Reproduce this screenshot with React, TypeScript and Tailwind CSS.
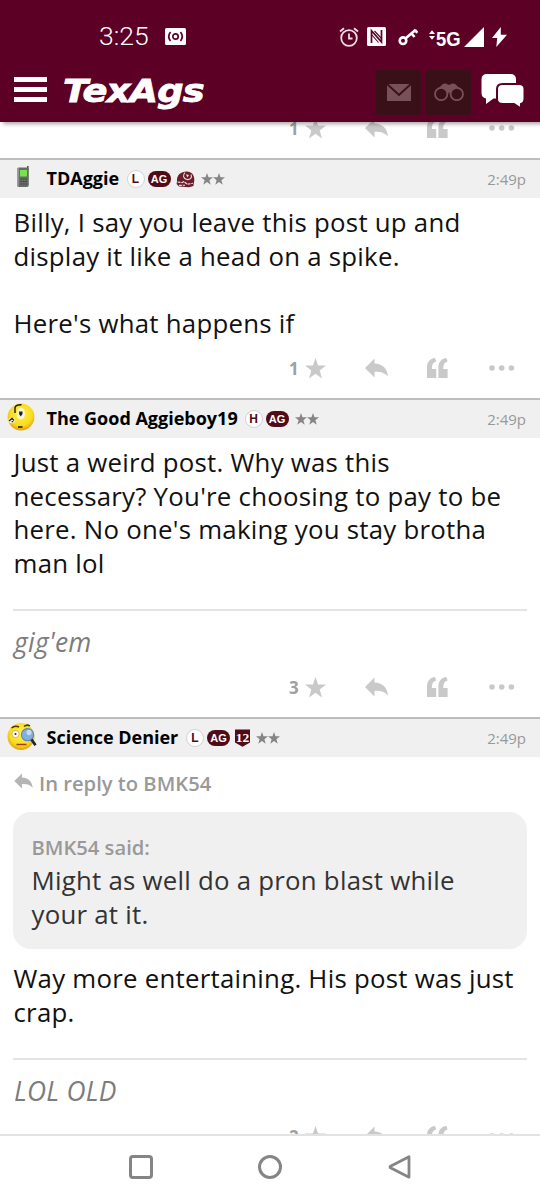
import type { ReactNode } from 'react';

const STAR = 'M10.5 0l2.6 7.6h7.9l-6.3 4.9 2.3 8-6.5-4.8-6.5 4.8 2.3-8L0 7.6h7.9z';

function ReplyIcon({ className }: { className: string }) {
  return (
    <svg viewBox="0 0 23 20" className={className} fill="currentColor">
      <path d="M0 10L9.5 0.5V5.6C17 5.8 22 10 23 18.3C19 14.3 15 13.4 9.5 13.9V19.5Z" />
    </svg>
  );
}

function Actions({ count }: { count: number }) {
  return (
    <div className="flex h-[57px] items-center justify-end pr-[25px] pb-[3px] text-[#c9c9c9]">
      <span className="w-[16px] text-[17px] leading-none font-bold text-[#a0a0a0]">{count}</span>
      <svg viewBox="0 0 21 21" className="h-[21px] w-[21px]" fill="currentColor">
        <path d={STAR} />
      </svg>
      <ReplyIcon className="ml-[39px] h-[20px] w-[23px]" />
      <svg viewBox="0 0 21 20" className="mb-px ml-[39px] h-[20px] w-[21px]" fill="currentColor">
        <path d="M0 20V9.5C0 4 3 0.5 8 0L9.2 3.6C6.5 4.2 4.9 6.5 4.9 9.8V11H9.2V20Z" />
        <path d="M11.4 20V9.5C11.4 4 14.4 0.5 19.4 0L20.6 3.6C17.9 4.2 16.3 6.5 16.3 9.8V11H20.6V20Z" />
      </svg>
      <svg viewBox="0 0 26 6" className="ml-[41px] h-[6px] w-[26px]" fill="currentColor">
        <circle cx="3" cy="3" r="2.8" />
        <circle cx="12.7" cy="3" r="2.8" />
        <circle cx="22.4" cy="3" r="2.8" />
      </svg>
    </div>
  );
}

function LetterBadge({ letter }: { letter: string }) {
  return (
    <span className="flex h-[18px] w-[18px] items-center justify-center rounded-full border border-[#d2d2d2] bg-white font-['Liberation_Sans',sans-serif] text-[12px] leading-none font-bold text-[#500a18]">
      {letter}
    </span>
  );
}

function AgBadge() {
  return (
    <span className="ml-[3px] flex h-[16px] w-[23px] items-center justify-center rounded-full bg-[#500a18] font-['Liberation_Sans',sans-serif] text-[11px] leading-none font-bold text-white">
      AG
    </span>
  );
}

function HelmetBadge() {
  return (
    <svg viewBox="0 0 19 17" className="ml-[5px] h-[17px] w-[19px]">
      <path d="M1 10C0.6 4 5 0.6 10.5 0.6C16 0.6 18.6 4.6 18.3 9.5L17.4 15L13 16.3L3 15.6L0.6 13Z" fill="#6b1d2b" />
      <path d="M9 1.6C6.5 4 7 7.5 11 8.5C14 9 16.5 6.5 15 3.5" fill="none" stroke="#e9dadd" strokeWidth="1.1" />
      <path d="M1.5 11L6 11.6L8 10.5L11 13.2L17 12.3M3 14.4L9 14.2" fill="none" stroke="#efe4e6" strokeWidth="1.1" strokeDasharray="3 0.8" />
      <path d="M10 3.2L13 4L11.3 6.6Z" fill="#eee1e4" />
    </svg>
  );
}

function TwelfthManBadge() {
  return (
    <svg viewBox="0 0 15 18" className="ml-[5px] h-[18px] w-[15px]">
      <path d="M0 0.5H15V13.5L7.5 17.8L0 13.5Z" fill="#500a18" />
      <text x="7.5" y="12.6" textAnchor="middle" fill="#fff" fontSize="13.5" fontWeight="700" fontFamily="Liberation Serif, serif">
        12
      </text>
    </svg>
  );
}

function Stars() {
  return (
    <span className="ml-[6px] flex text-[#858585]">
      <svg viewBox="0 0 21 21" className="h-[12px] w-[12px]" fill="currentColor"><path d={STAR} /></svg>
      <svg viewBox="0 0 21 21" className="h-[12px] w-[12px]" fill="currentColor"><path d={STAR} /></svg>
    </span>
  );
}

function PhoneAvatar() {
  return (
    <svg viewBox="0 0 14 22" className="ml-[9px] h-[22px] w-[14px]">
      <path d="M11 0H12.6V4H11Z" fill="#555" />
      <rect x="1" y="1.5" width="11.8" height="19.5" rx="2" fill="#666b68" />
      <path d="M1 4C1 2.5 2 1.8 3 1.8L2.6 20.8C1.6 20.5 1 20 1 19Z" fill="#9a9d9b" />
      <rect x="4" y="4" width="7" height="6.5" fill="#79e34c" />
      <path d="M4.5 13H11M4.5 15.5H11M4.5 18H11" stroke="#444" strokeWidth="1.1" strokeDasharray="1.6 0.8" />
    </svg>
  );
}

function ConfusedAvatar() {
  return (
    <svg viewBox="0 0 28 28" className="h-[28px] w-[28px]">
      <defs>
        <radialGradient id="face" cx="0.5" cy="0.4" r="0.6">
          <stop offset="0" stopColor="#fff34a" />
          <stop offset="0.7" stopColor="#f9db20" />
          <stop offset="1" stopColor="#e2a10c" />
        </radialGradient>
      </defs>
      <circle cx="14" cy="14" r="13.4" fill="url(#face)" />
      <ellipse cx="13.8" cy="10.5" rx="4.2" ry="6" fill="#fff6d0" />
      <ellipse cx="4.6" cy="17.5" rx="3.4" ry="2.8" fill="#fff6d0" />
      <path d="M8 10V4.5Q9 1.6 14.5 1.8" fill="none" stroke="#1b1b10" strokeWidth="1.4" />
      <path d="M12 8.5H15.5V11L13.8 13.5L12.3 11.5Z" fill="#1e2030" />
      <path d="M2 18L5 15.5L7 17.5M4.6 18.7H6.2" fill="none" stroke="#1e2020" strokeWidth="1.3" />
      <path d="M11 24H15.5" stroke="#332d00" strokeWidth="1.7" />
    </svg>
  );
}

function DetectiveAvatar() {
  return (
    <svg viewBox="0 0 30 29" className="h-[29px] w-[30px]">
      <circle cx="14" cy="14.5" r="13.5" fill="url(#face)" />
      <path d="M4.5 6Q8 3 12 5M17 4.5Q20 2 23 4" fill="none" stroke="#4c3705" strokeWidth="1.5" />
      <circle cx="8.5" cy="12" r="3.6" fill="#fff" stroke="#c8a02c" strokeWidth="0.7" />
      <circle cx="8.5" cy="12" r="1.1" fill="#5b2414" />
      <circle cx="20.5" cy="12.7" r="6.1" fill="#82aee0" stroke="#5c86bb" strokeWidth="1.1" />
      <ellipse cx="22" cy="10.5" rx="2.5" ry="2.8" fill="#c3dcf5" />
      <path d="M9.5 22.5H19.5" stroke="#a13d14" strokeWidth="1.5" />
      <path d="M24.5 17.5L28.5 23.3" stroke="#262626" strokeWidth="2.8" />
    </svg>
  );
}

function PostHeader({ avatar, name, nameWidth, children }: { avatar: ReactNode; name: string; nameWidth: string; children: ReactNode }) {
  return (
    <div className="flex h-[40px] items-center border-t-2 border-[#bdbdbd] bg-[#f0f0f0] pr-[14px] pl-[7px]">
      <div className="flex w-[39.5px] items-center pb-[4px]">{avatar}</div>
      <div className={`${nameWidth} pb-px text-[18px] font-bold whitespace-nowrap text-black`}>{name}</div>
      <div className="flex items-center">{children}</div>
      <div className="ml-auto text-[15px] text-[#999]">2:49p</div>
    </div>
  );
}

function Signature({ children }: { children: ReactNode }) {
  return (
    <div className="mx-[13px] mt-[28px] h-[51px] border-t-2 border-[#e4e4e4] pt-[14px] pl-px text-[26.4px] leading-[34px] tracking-[0.3px] text-[#7c7c7c] italic">
      {children}
    </div>
  );
}

const bodyText = 'mt-[8px] pb-px px-[13.5px] text-[25.8px] leading-[33.5px] tracking-[0.25px] whitespace-nowrap text-[#111]';

function StatusBar() {
  return (
    <div className="flex h-[62px] items-center pt-[11px] pl-[99px] text-white">
      <span className="w-[66px] font-[Roboto,sans-serif] text-[26.5px] leading-none font-light">3:25</span>
      <svg viewBox="0 0 21 17" className="h-[17px] w-[21px]">
        <rect width="21" height="17" rx="1.5" fill="#fff" />
        <g fill="none" stroke="#5c0025" strokeWidth="1.7">
          <circle cx="10.5" cy="8.5" r="2.7" />
          <path d="M5.5 4Q2 8.5 5.5 13M15.5 4Q19 8.5 15.5 13" />
        </g>
      </svg>
      <svg viewBox="0 0 20 20" className="ml-[153px] h-[20px] w-[20px]" fill="none" stroke="#f3dce4" strokeWidth="1.8">
        <circle cx="10" cy="11" r="7.8" />
        <path d="M10 6.5V11.5H13.5M1 4.5L5 1.2M15 1.2L19 4.5" />
      </svg>
      <svg viewBox="0 0 19 19" className="ml-[8px] h-[19px] w-[19px]">
        <rect width="19" height="19" rx="1.5" fill="#fff" />
        <path d="M4.5 16V3.8L14.5 15V3" fill="none" stroke="#5c0025" strokeWidth="1.7" />
        <path d="M7.5 4L14.5 11.5M4.5 7.5L11.5 15.5" stroke="#5c0025" strokeWidth="1.1" />
      </svg>
      <svg viewBox="0 0 20 18" className="ml-[12px] h-[18px] w-[20px]" fill="none" stroke="#fff">
        <circle cx="5" cy="12.7" r="3.3" strokeWidth="2.6" />
        <path d="M7.5 10.5L17.7 1.7M13.5 5.5L16.5 9M17 2L19.3 4.8" strokeWidth="2.6" />
      </svg>
      <svg viewBox="0 0 6 10" className="mb-[4px] ml-[11px] h-[10px] w-[6px]" fill="#fff">
        <path d="M0 4L3 0.3L6 4ZM0 6L3 9.7L6 6Z" />
      </svg>
      <span className="mt-[4px] ml-[1px] w-[28px] font-['Liberation_Sans',sans-serif] text-[21px] leading-none font-bold">
        <span className="block w-fit origin-left scale-x-[0.88]">5G</span>
      </span>
      <svg viewBox="0 0 20 20" className="h-[20px] w-[20px]" fill="#fff">
        <path d="M20 0V20H0Z" />
      </svg>
      <svg viewBox="0 0 15 20" className="ml-[8px] h-[20px] w-[15px]" fill="#fff">
        <path d="M8.8 0L0 11H5.2L4.3 20L15 7.8H8.8Z" />
      </svg>
    </div>
  );
}

function TopBar() {
  return (
    <div className="flex h-[60px] items-center pl-[14px]">
      <div className="mb-[5px] flex w-[33px] flex-col gap-[5.5px]">
        <div className="h-[4.5px] bg-white" />
        <div className="h-[4.5px] bg-white" />
        <div className="h-[4.5px] bg-white" />
      </div>
      <div className="mb-[2px] ml-[16px] w-[313px]">
        <div className="w-fit origin-left scale-x-[1.18] font-['DejaVu_Sans',sans-serif] text-[31.2px] leading-[36px] font-bold tracking-[-0.7px] text-white italic [-webkit-text-stroke:0.8px_white]">
          TexAgs
        </div>
      </div>
      <div className="flex h-[45px] w-[45px] items-center justify-center rounded-[2px] bg-[#3a1018]">
        <svg viewBox="0 0 24 17" className="h-[17px] w-[24px]">
          <path d="M0 0H24V17H0Z" fill="#765158" />
          <path d="M0 0L12 11L24 0" fill="none" stroke="#3a1018" strokeWidth="2" />
        </svg>
      </div>
      <div className="ml-[5px] flex h-[45px] w-[45px] items-center justify-center rounded-[2px] bg-[#3a1018]">
        <svg viewBox="0 0 30 18" className="h-[18px] w-[30px]">
          <path d="M3 7L8.5 1.3Q11.5 -0.6 14 1.8H16Q18.5 -0.6 21.5 1.3L27 7L22 13H17L15 9L13 13H7Z" fill="#765158" />
          <circle cx="7.2" cy="11" r="6.2" fill="#3a1018" stroke="#765158" strokeWidth="1.8" />
          <circle cx="22.8" cy="11" r="6.2" fill="#3a1018" stroke="#765158" strokeWidth="1.8" />
        </svg>
      </div>
      <svg viewBox="0 0 44 36" className="mb-[2px] ml-[10px] h-[36px] w-[44px]">
        <path d="M6 1H29.5Q35 1 35 6.5V20Q35 25.5 29.5 25.5H12.5L5 31V25.5Q0.5 24.5 0.5 20V6.5Q0.5 1 6 1Z" fill="#fff" />
        <path d="M21.5 11H38Q43.5 11 43.5 16V25.5Q43.5 30 40 31V35.5L33 31H21.5Q16 31 16 26V16Q16 11 21.5 11Z" fill="#fff" stroke="#5c0025" strokeWidth="2" />
      </svg>
    </div>
  );
}

export default function App() {
  return (
    <div className="flex h-[1200px] w-[540px] flex-col overflow-hidden bg-white font-['Open_Sans',sans-serif]">
      <header className="z-10 h-[122px] shrink-0 bg-[#5c0025] shadow-[3px_2px_4px_rgba(0,0,0,0.35)]">
        <StatusBar />
        <TopBar />
      </header>

      <main className="min-h-0 flex-1 overflow-hidden">
        <div className="-mt-[21px]">
          <Actions count={1} />
        </div>

        <article>
          <PostHeader avatar={<PhoneAvatar />} name="TDAggie" nameWidth="w-[80px]">
            <LetterBadge letter="L" />
            <AgBadge />
            <HelmetBadge />
            <Stars />
          </PostHeader>
          <div className={bodyText}>
            Billy, I say you leave this post up and<br />
            display it like a head on a spike.<br />
            <br />
            Here's what happens if
          </div>
          <Actions count={1} />
        </article>

        <article>
          <PostHeader avatar={<ConfusedAvatar />} name="The Good Aggieboy19" nameWidth="w-[198px]">
            <LetterBadge letter="H" />
            <AgBadge />
            <Stars />
          </PostHeader>
          <div className={bodyText}>
            Just a weird post. Why was this<br />
            necessary? You're choosing to pay to be<br />
            here. No one's making you stay brotha<br />
            man lol
          </div>
          <Signature>gig'em</Signature>
          <Actions count={3} />
        </article>

        <article>
          <PostHeader avatar={<DetectiveAvatar />} name="Science Denier" nameWidth="w-[139.5px]">
            <LetterBadge letter="L" />
            <AgBadge />
            <TwelfthManBadge />
            <Stars />
          </PostHeader>
          <div className="flex h-[55px] items-center px-[14px] pb-[2px] text-[20.2px] font-semibold text-[#999]">
            <ReplyIcon className="mb-[6px] h-[16px] w-[19px] text-[#b5b5b5]" />
            <span className="ml-[6px]">In reply to BMK54</span>
          </div>
          <div className="mx-[13px] h-[137px] rounded-[18px] bg-[#f0f0f0] px-[18.5px] pt-[19px] whitespace-nowrap">
            <div className="pb-px text-[20.2px] leading-[32px] font-semibold text-[#999]">BMK54 said:</div>
            <div className="text-[25.8px] leading-[33.5px] tracking-[0.25px] text-[#333]">
              Might as well do a pron blast while<br />
              your at it.
            </div>
          </div>
          <div className="pt-[5px]">
            <div className={bodyText}>
              Way more entertaining. His post was just<br />
              crap.
            </div>
          </div>
          <Signature>LOL OLD</Signature>
          <Actions count={2} />
        </article>
      </main>

      <nav className="h-[66px] shrink-0 border-t-2 border-[#e2e2e2] bg-white">
        <div className="flex h-[62px] items-center justify-between pr-[128px] pl-[129px]">
          <svg viewBox="0 0 24 24" className="h-[24px] w-[24px]" fill="none" stroke="#858585" strokeWidth="3">
            <rect x="1.5" y="1.5" width="21" height="21" rx="2.5" />
          </svg>
          <svg viewBox="0 0 24 24" className="mr-px h-[24px] w-[24px]" fill="none" stroke="#858585" strokeWidth="3">
            <circle cx="12" cy="12" r="10.5" />
          </svg>
          <svg viewBox="0 0 24 24" className="h-[24px] w-[24px]" fill="none" stroke="#858585" strokeWidth="2.8" strokeLinejoin="round">
            <path d="M21 1.8V22.2L2.5 12.8Q1.5 12 2.5 11.2Z" />
          </svg>
        </div>
      </nav>
    </div>
  );
}
